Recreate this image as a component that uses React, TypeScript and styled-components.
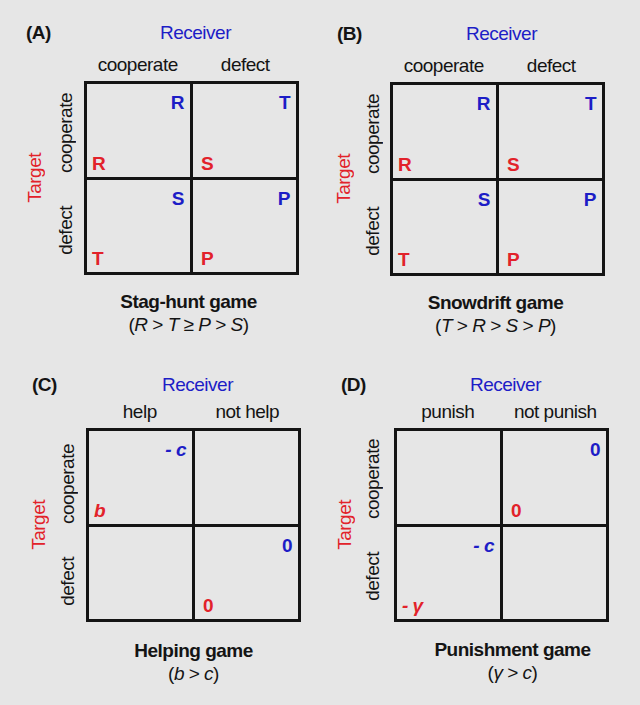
import styled, { createGlobalStyle } from 'styled-components'
import type { ReactNode } from 'react'

const GlobalStyle = createGlobalStyle`
  html, body {
    margin: 0;
    padding: 0;
    background: #e6e6e6;
  }
  body {
    font-family: "Liberation Sans", Arial, Helvetica, sans-serif;
  }
`

const BLUE = '#1d1dc6'
const RED = '#e2222a'

const Page = styled.main`
  width: 640px;
  height: 705px;
  display: grid;
  grid-template-columns: 320px 320px;
  grid-template-rows: 350px 355px;
  background: #e6e6e6;
  color: #141414;
  font-size: 19px;
  letter-spacing: -0.5px;
  overflow: hidden;
`

type Layout = {
  left: number
  top: number
  headGap: number
  g1: number
  g2: number
  capGap: number
  rowShift: number
  capShift: number
  tagPad: number
}

const Panel = styled.section<{ $l: Layout }>`
  display: grid;
  grid-template-columns: ${p => 20 + p.$l.g1}px ${p => 20 + p.$l.g2}px 215px;
  grid-template-rows: 20px ${p => p.$l.headGap}px 20px 6px 194px ${p => p.$l.capGap}px auto;
  padding: ${p => p.$l.top}px 0 0 ${p => p.$l.left}px;
  align-content: start;
`

const Tag = styled.div<{ $pad: number }>`
  grid-column: 1 / 3;
  grid-row: 1;
  padding-left: ${p => p.$pad}px;
  font-weight: bold;
  line-height: 20px;
`

const Receiver = styled.div`
  grid-column: 3;
  grid-row: 1;
  padding-left: 8px;
  text-align: center;
  line-height: 20px;
  color: ${BLUE};
`

const ColHeads = styled.div`
  grid-column: 3;
  grid-row: 3;
  display: flex;
  line-height: 20px;
`

const ColHead = styled.div`
  flex: 1;
  text-align: center;
  white-space: nowrap;
`

const Target = styled.div`
  grid-column: 1;
  grid-row: 5;
  align-self: center;
  justify-self: start;
  writing-mode: vertical-rl;
  transform: rotate(180deg);
  line-height: 20px;
  color: ${RED};
`

const RowHeads = styled.div`
  grid-column: 2;
  grid-row: 5;
  display: flex;
  flex-direction: column;
  justify-self: start;
`

const RowHead = styled.div<{ $shift: number }>`
  flex: 1;
  box-sizing: border-box;
  padding-top: ${p => p.$shift * 2}px;
  display: flex;
  align-items: center;
`

const Vertical = styled.span`
  writing-mode: vertical-rl;
  transform: rotate(180deg);
  line-height: 20px;
  white-space: nowrap;
`

const Matrix = styled.div`
  grid-column: 3;
  grid-row: 5;
  box-sizing: border-box;
  width: 215px;
  height: 194px;
  display: grid;
  grid-template-columns: 1fr 1fr;
  grid-template-rows: 1fr 1fr;
  gap: 3px;
  padding: 3px;
  background: #141414;
`

const Cell = styled.div`
  background: #e6e6e6;
  display: flex;
  flex-direction: column;
  justify-content: space-between;
  padding: 10px 6px 4px 5px;

  &:nth-child(even) {
    padding-left: 8px;
  }
`

const Payoff = styled.span<{ $receiver?: boolean; $italic?: boolean }>`
  align-self: ${p => (p.$receiver ? 'flex-end' : 'flex-start')};
  min-height: 18px;
  line-height: 18px;
  font-weight: bold;
  font-style: ${p => (p.$italic ? 'italic' : 'normal')};
  color: ${p => (p.$receiver ? BLUE : RED)};
  white-space: pre;
`

const Caption = styled.div<{ $shift: number }>`
  grid-column: 3;
  grid-row: 7;
  text-align: center;
  line-height: 23px;
  padding-left: ${p => (p.$shift > 0 ? p.$shift * 2 : 0)}px;
  padding-right: ${p => (p.$shift < 0 ? -p.$shift * 2 : 0)}px;
`

const Title = styled.div`
  font-weight: bold;
`

const Var = styled.i`
  font-style: italic;
`

type CellData = { top?: string; bot?: string; italic?: boolean }

type PanelData = {
  tag: string
  cols: [string, string]
  cells: CellData[]
  title: string
  formula: ReactNode
  layout: Layout
}

const panels: PanelData[] = [
  {
    tag: '(A)',
    cols: ['cooperate', 'defect'],
    cells: [
      { top: 'R', bot: 'R' },
      { top: 'T', bot: 'S' },
      { top: 'S', bot: 'T' },
      { top: 'P', bot: 'P' },
    ],
    title: 'Stag-hunt game',
    formula: (
      <>
        (<Var>R</Var> &gt; <Var>T</Var> ≥ <Var>P</Var> &gt; <Var>S</Var>)
      </>
    ),
    layout: { left: 25, top: 23, headGap: 12, g1: 11, g2: 8, capGap: 15, rowShift: 4, capShift: -3, tagPad: 1 },
  },
  {
    tag: '(B)',
    cols: ['cooperate', 'defect'],
    cells: [
      { top: 'R', bot: 'R' },
      { top: 'T', bot: 'S' },
      { top: 'S', bot: 'T' },
      { top: 'P', bot: 'P' },
    ],
    title: 'Snowdrift game',
    formula: (
      <>
        (<Var>T</Var> &gt; <Var>R</Var> &gt; <Var>S</Var> &gt; <Var>P</Var>)
      </>
    ),
    layout: { left: 14, top: 24, headGap: 12, g1: 9, g2: 7, capGap: 15, rowShift: 4, capShift: -2, tagPad: 3 },
  },
  {
    tag: '(C)',
    cols: ['help', 'not help'],
    cells: [
      { top: '- c', bot: 'b', italic: true },
      {},
      {},
      { top: '0', bot: '0' },
    ],
    title: 'Helping game',
    formula: (
      <>
        (<Var>b</Var> &gt; <Var>c</Var>)
      </>
    ),
    layout: { left: 29, top: 25, headGap: 7, g1: 9, g2: 8, capGap: 17, rowShift: 8, capShift: 0, tagPad: 3 },
  },
  {
    tag: '(D)',
    cols: ['punish', 'not punish'],
    cells: [
      {},
      { top: '0', bot: '0' },
      { top: '- c', bot: '- γ', italic: true },
      {},
    ],
    title: 'Punishment game',
    formula: (
      <>
        (<Var>γ</Var> &gt; <Var>c</Var>)
      </>
    ),
    layout: { left: 15, top: 25, headGap: 7, g1: 8, g2: 11, capGap: 16, rowShift: 3, capShift: 11, tagPad: 6 },
  },
]

const GamePanel = ({ data }: { data: PanelData }) => {
  const l = data.layout
  return (
    <Panel $l={l}>
      <Tag $pad={l.tagPad}>{data.tag}</Tag>
      <Receiver>Receiver</Receiver>
      <ColHeads>
        {data.cols.map(c => (
          <ColHead key={c}>{c}</ColHead>
        ))}
      </ColHeads>
      <Target>Target</Target>
      <RowHeads>
        <RowHead $shift={l.rowShift}>
          <Vertical>cooperate</Vertical>
        </RowHead>
        <RowHead $shift={l.rowShift}>
          <Vertical>defect</Vertical>
        </RowHead>
      </RowHeads>
      <Matrix>
        {data.cells.map((cell, i) => (
          <Cell key={i}>
            <Payoff $receiver $italic={cell.italic}>{cell.top ?? ''}</Payoff>
            <Payoff $italic={cell.italic}>{cell.bot ?? ''}</Payoff>
          </Cell>
        ))}
      </Matrix>
      <Caption $shift={l.capShift}>
        <Title>{data.title}</Title>
        <div>{data.formula}</div>
      </Caption>
    </Panel>
  )
}

export default function App() {
  return (
    <>
      <GlobalStyle />
      <Page>
        {panels.map(p => (
          <GamePanel key={p.tag} data={p} />
        ))}
      </Page>
    </>
  )
}
